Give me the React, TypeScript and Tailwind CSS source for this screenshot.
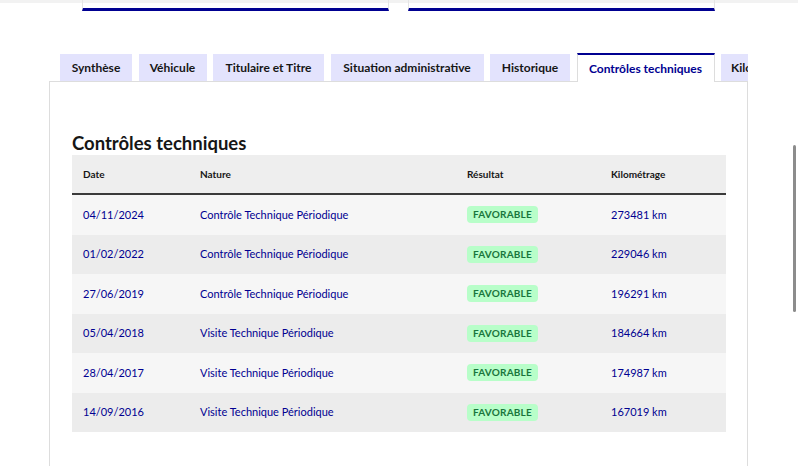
const ROWS = [
  { date: "04/11/2024", nature: "Contrôle Technique Périodique", km: "273481 km" },
  { date: "01/02/2022", nature: "Contrôle Technique Périodique", km: "229046 km" },
  { date: "27/06/2019", nature: "Contrôle Technique Périodique", km: "196291 km" },
  { date: "05/04/2018", nature: "Visite Technique Périodique", km: "184664 km" },
  { date: "28/04/2017", nature: "Visite Technique Périodique", km: "174987 km" },
  { date: "14/09/2016", nature: "Visite Technique Périodique", km: "167019 km" },
];

const TABS = [
  { label: "Synthèse", w: "w-[72px]" },
  { label: "Véhicule", w: "w-[68px]" },
  { label: "Titulaire et Titre", w: "w-[111px]" },
  { label: "Situation administrative", w: "w-[153px]" },
  { label: "Historique", w: "w-[80px]" },
  { label: "Contrôles techniques", w: "w-[138px]", active: true },
  { label: "Kilométrage", w: "w-[100px]" },
];

export default function App() {
  return (
    <div className="relative w-[798px] h-[466px] overflow-hidden bg-white font-['Lato','Noto_Sans',sans-serif] text-[#161616]">
      {/* bottom of the cards above */}
      <div className="h-[3px] bg-[#f2f2f2]" />
      <div className="flex gap-[19px] ml-[82px] -mt-[3px]">
        <div className="w-[307px] h-[11px] border-x border-[#e5e5e5] border-b-[3px] border-b-[#000091]" />
        <div className="w-[307px] h-[11px] border-x border-[#e5e5e5] border-b-[3px] border-b-[#000091]" />
      </div>

      {/* tabs */}
      <div className="ml-[60px] mt-[42px] w-[688px] h-[29px] flex items-end gap-[6.5px] overflow-hidden relative z-10">
        {TABS.map((t) =>
          t.active ? (
            <div
              key={t.label}
              className={`${t.w} shrink-0 h-[29px] bg-white border-t-2 border-[#000091] border-x border-x-[#dddddd] flex items-center justify-center text-[12px] font-bold text-[#000091]`}
            >
              {t.label}
            </div>
          ) : (
            <div
              key={t.label}
              className={`${t.w} shrink-0 h-[27px] mb-px bg-[#e3e3fd] flex items-center text-[12px] font-bold whitespace-nowrap ${t.label === "Kilométrage" ? "justify-start pl-[10px]" : "justify-center"}`}
            >
              {t.label}
            </div>
          )
        )}
      </div>

      {/* panel */}
      <div className="ml-[49px] -mt-px w-[699px] h-[400px] border border-[#dddddd] pl-[22px] pr-[21px] pt-[50px]">
        <h2 className="text-[18.5px] font-bold leading-[22px] mb-px">Contrôles techniques</h2>

        <div className="w-[654px]">
          <div className="grid grid-cols-[117px_267px_144px_1fr] pl-[11px] h-[40px] items-center bg-[#eeeeee] border-b-2 border-[#3a3a3a] text-[10px] font-bold">
            <div>Date</div>
            <div>Nature</div>
            <div>Résultat</div>
            <div>Kilométrage</div>
          </div>
          {ROWS.map((r, i) => (
            <div
              key={r.date}
              className={`grid grid-cols-[117px_267px_144px_1fr] pl-[11px] h-[39.5px] items-center text-[11px] text-[#000091] ${i % 2 === 0 ? "bg-[#f6f6f6]" : "bg-[#ececec]"}`}
            >
              <div>{r.date}</div>
              <div>{r.nature}</div>
              <div>
                <span className="inline-flex items-center h-[17px] px-[6px] rounded-[4px] bg-[#b8fec9] text-[#18753c] text-[10px] font-bold uppercase tracking-[0.2px]">
                  Favorable
                </span>
              </div>
              <div>{r.km}</div>
            </div>
          ))}
        </div>
      </div>

      {/* overlay scrollbar */}
      <div className="absolute right-[2px] top-[145px] w-[3px] h-[167px] rounded-full bg-[#8c8c8c]" />
    </div>
  );
}
